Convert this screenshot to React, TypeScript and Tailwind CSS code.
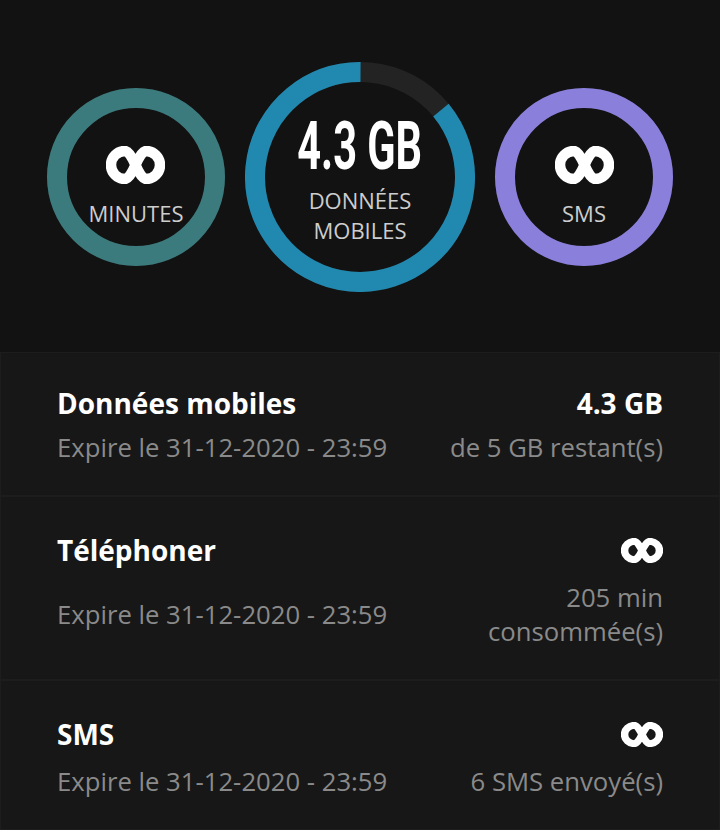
import React from "react";

const font = { fontFamily: '"Open Sans", "Noto Sans", sans-serif' };

function InfinityMark({ w, h }: { w: number; h: number }) {
  return (
    <svg width={w} height={h} viewBox="-29.5 -19 59 38" preserveAspectRatio="none">
      <path
        d="M0 0 C3 -7 7 -14 10.5 -14 A14 14 0 0 1 10.5 14 C7 14 3 7 0 0 C-3 -7 -7 -14 -10.5 -14 A14 14 0 0 0 -10.5 14 C-7 14 -3 7 0 0 Z"
        fill="none"
        stroke="#ffffff"
        strokeWidth={10.5}
        strokeLinejoin="round"
      />
    </svg>
  );
}

interface RingProps {
  size: number;
  color: string;
  used?: number;
  children: React.ReactNode;
}

function Ring({ size, color, used = 1, children }: RingProps) {
  const stroke = 20;
  const r = (size - stroke) / 2;
  const c = 2 * Math.PI * r;
  const startDeg = -90 + (1 - used) * 360;
  return (
    <div className="relative shrink-0" style={{ width: size, height: size }}>
      <svg width={size} height={size} className="absolute inset-0">
        <circle cx={size / 2} cy={size / 2} r={r} fill="none" stroke="#232323" strokeWidth={stroke} />
        <circle
          cx={size / 2}
          cy={size / 2}
          r={r}
          fill="none"
          stroke={color}
          strokeWidth={stroke}
          strokeDasharray={`${c * used} ${c}`}
          transform={`rotate(${startDeg} ${size / 2} ${size / 2})`}
        />
      </svg>
      <div className="relative flex h-full flex-col items-center justify-center">{children}</div>
    </div>
  );
}

interface UsageCardProps {
  title: string;
  value: React.ReactNode;
  detail: string[];
}

function UsageCard({ title, value, detail }: UsageCardProps) {
  return (
    <div className="border border-[#1d1d1d] bg-[#171717] px-14 pt-8 pb-[30px]">
      <div className="flex items-center justify-between">
        <span className="text-[28px] font-bold leading-[36px] text-white">{title}</span>
        <span className="text-[28px] font-bold leading-[36px] text-white">{value}</span>
      </div>
      <div className="mt-[10px] flex items-center justify-between text-[25.7px] leading-[34px] text-[#8a8a8a]">
        <span>Expire le 31-12-2020 - 23:59</span>
        <div className="text-right">
          {detail.map((d) => (
            <div key={d}>{d}</div>
          ))}
        </div>
      </div>
    </div>
  );
}

function SmallInfinity() {
  return (
    <span className="flex h-[42px] items-center">
      <InfinityMark w={42} h={25} />
    </span>
  );
}

export default function App() {
  return (
    <div className="min-h-[830px] w-[720px] bg-[#121212]" style={font}>
      {/* Rings */}
      <div className="flex items-center justify-center gap-5 pt-[62px] pb-[60px]">
        <Ring size={178} color="#3b7b7d">
          <div className="flex flex-col items-center pt-5">
            <InfinityMark w={59} h={38} />
            <span className="mt-[14px] text-[22px] leading-[30px] text-[#cdcdcd]">MINUTES</span>
          </div>
        </Ring>
        <Ring size={230} color="#2189b0" used={0.86}>
          <div className="flex flex-col items-center pt-[6px]">
            <span
              className="inline-block scale-x-[0.62] text-[67px] font-bold leading-[62px] text-white"
              style={{ fontFamily: "Roboto, sans-serif" }}
            >
              4.3 GB
            </span>
            <span className="mt-[8px] text-[22px] leading-[30px] text-[#cdcdcd]">DONNÉES</span>
            <span className="text-[22px] leading-[30px] text-[#cdcdcd]">MOBILES</span>
          </div>
        </Ring>
        <Ring size={178} color="#8b7fdc">
          <div className="flex flex-col items-center pt-5">
            <InfinityMark w={59} h={38} />
            <span className="mt-[14px] text-[22px] leading-[30px] text-[#cdcdcd]">SMS</span>
          </div>
        </Ring>
      </div>

      {/* Usage list */}
      <div className="flex flex-col">
        <UsageCard title="Données mobiles" value="4.3 GB" detail={["de 5 GB restant(s)"]} />
        <UsageCard title="Téléphoner" value={<SmallInfinity />} detail={["205 min", "consommée(s)"]} />
        <UsageCard title="SMS" value={<SmallInfinity />} detail={["6 SMS envoyé(s)"]} />
      </div>
    </div>
  );
}
